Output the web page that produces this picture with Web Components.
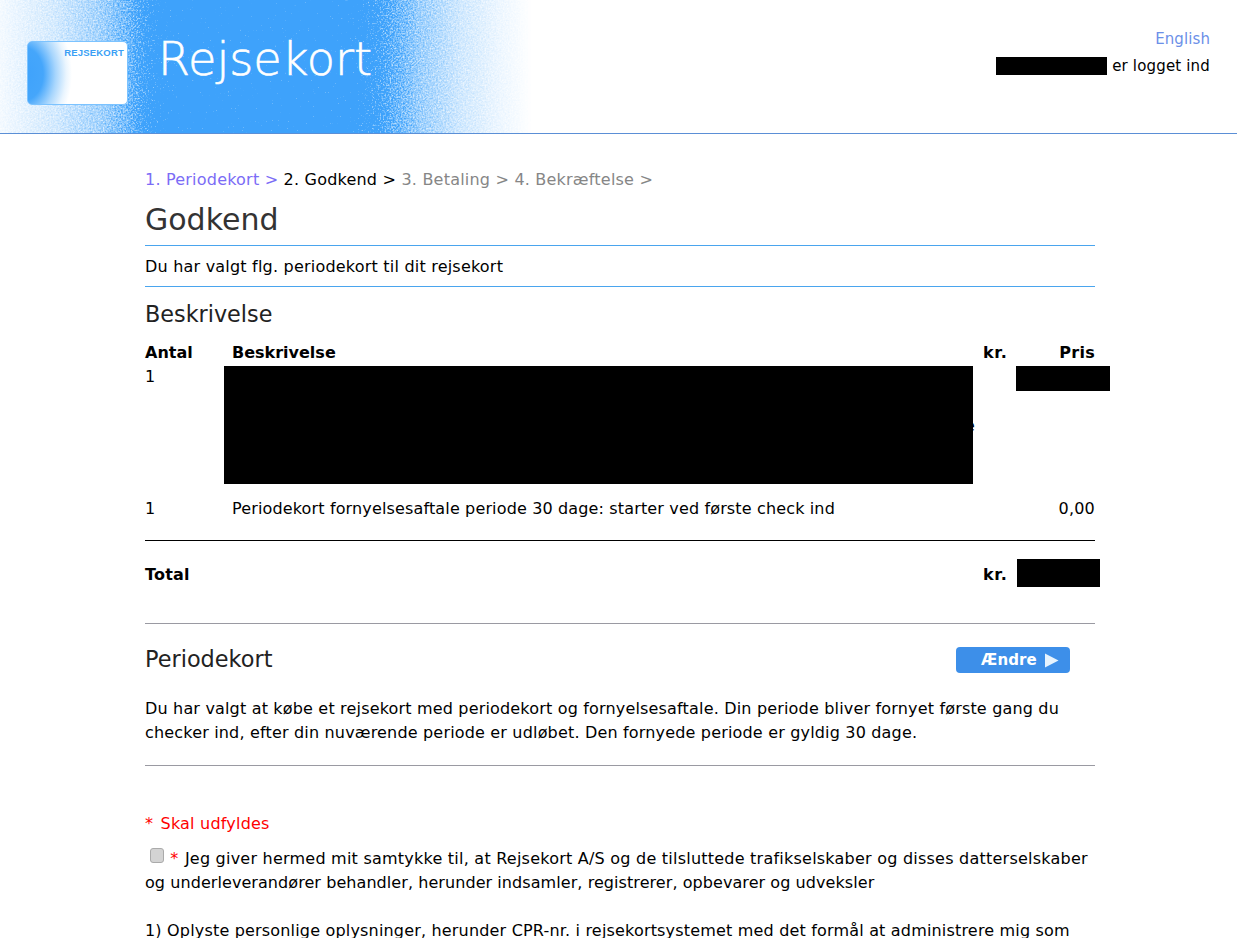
<!DOCTYPE html>
<html lang="da"><head><meta charset="utf-8"><title>Rejsekort</title>
<style>
html,body{margin:0;padding:0;background:#fff;}
body{font:16px/24px "DejaVu Sans",sans-serif;color:#000;height:938px;overflow:hidden;letter-spacing:.21px}
</style></head><body>
<rk-header></rk-header>
<rk-page>
  <rk-steps></rk-steps>
  <rk-order></rk-order>
  <rk-period></rk-period>
  <rk-consent></rk-consent>
</rk-page>
<script>
function def(name, html){
  customElements.define(name, class extends HTMLElement{
    constructor(){super();this.attachShadow({mode:'open'}).innerHTML=html;}
  });
}
def('rk-redact',`<style>:host{position:absolute;background:#000;display:block}</style>`);
def('rk-header',`<style>
:host{display:flex;position:relative;height:133px;border-bottom:1px solid #5b8fd6;justify-content:space-between;overflow:hidden;font:15px/24px "DejaVu Sans",sans-serif;letter-spacing:.17px}
svg.bg{position:absolute;left:0;top:0}
.left{position:relative;display:flex;align-items:flex-start;padding:41px 0 0 27px;gap:30px}
.card{width:99px;height:62px;border:1px solid #7cc3ff;border-radius:5px;position:relative;overflow:hidden;background:radial-gradient(ellipse 48px 66px at -4px 32px,#3ea2fb 0,#45a6fb 40%,#a8d6fd 66%,#eaf5fe 88%,#fff 100%),#fff;text-align:right}
.card b{display:block;font:bold 9.5px/10px "Liberation Sans",sans-serif;letter-spacing:.2px;color:#3a9ff5;padding:6px 3px 0 0}
.title{font:200 46.2px/44px "DejaVu Sans Light","DejaVu Sans ExtraLight","DejaVu Sans",sans-serif;color:#fff;letter-spacing:0;margin-top:-4px;-webkit-text-stroke:.6px #fff}
.right{position:relative;text-align:right;padding:27px 27px 0 0}
.en{color:#6c90e8;display:block;margin-bottom:3px;letter-spacing:.1px}
.user{position:relative;display:block}
rk-redact{left:-116px;top:3px;width:111px;height:18px}
</style>
<svg class="bg" width="560" height="133" aria-hidden="true">
<defs>
<linearGradient id="g" x1="0" x2="1" y1="0" y2="0">
<stop offset="0" stop-color="#3ea2fb" stop-opacity=".03"/>
<stop offset=".1" stop-color="#3ea2fb" stop-opacity=".12"/>
<stop offset=".18" stop-color="#3ea2fb" stop-opacity=".25"/>
<stop offset=".23" stop-color="#3ea2fb" stop-opacity=".4"/>
<stop offset=".26" stop-color="#3ea2fb" stop-opacity=".58"/>
<stop offset=".29" stop-color="#3ea2fb" stop-opacity=".85"/>
<stop offset=".32" stop-color="#3ea2fb" stop-opacity="1"/>
<stop offset=".62" stop-color="#3ea2fb" stop-opacity="1"/>
<stop offset=".66" stop-color="#3ea2fb" stop-opacity=".66"/>
<stop offset=".7" stop-color="#3ea2fb" stop-opacity=".44"/>
<stop offset=".75" stop-color="#3ea2fb" stop-opacity=".27"/>
<stop offset=".82" stop-color="#3ea2fb" stop-opacity=".13"/>
<stop offset=".89" stop-color="#3ea2fb" stop-opacity=".05"/>
<stop offset=".95" stop-color="#3ea2fb" stop-opacity="0"/>
</linearGradient>
<filter id="n" x="0" y="0" width="100%" height="100%" color-interpolation-filters="sRGB">
<feTurbulence type="fractalNoise" baseFrequency=".6" numOctaves="2" seed="4" result="t"/>
<feColorMatrix in="t" type="matrix" values="0 0 0 0 1 0 0 0 0 1 0 0 0 0 1 1.6 0 0 0 -.3" result="m"/>
<feComposite in="SourceGraphic" in2="m" operator="arithmetic" k1="1.3" k2=".45" k3="0" k4="0" result="a"/>
<feColorMatrix in="a" type="matrix" values="0 0 0 0 .243 0 0 0 0 .635 0 0 0 0 .984 0 0 0 1.7 0"/>
</filter>
</defs>
<rect width="560" height="133" fill="url(#g)" filter="url(#n)"/>
</svg>
<div class="left"><div class="card"><b>REJSEKORT</b></div><div class="title">Rejsekort</div></div>
<div class="right"><span class="en">English</span><span class="user"><rk-redact></rk-redact>er logget ind</span></div>`);
def('rk-page',`<style>:host{display:block;width:950px;margin-left:145px;padding-top:34px}</style><slot></slot>`);
def('rk-steps',`<style>
:host{display:block;font-size:16px;line-height:24px}
.a{color:#7b6cf6}.b{color:#000}.c{color:#868686}
h1{font:400 30px/40px "DejaVu Sans",sans-serif;letter-spacing:0;color:#333;margin:8px 0 5px}
.lead{border-top:1px solid #4aa5ee;border-bottom:1px solid #4aa5ee;padding:9px 0 7px}
</style>
<div><span class="a">1. Periodekort &gt;</span> <span class="b">2. Godkend &gt;</span> <span class="c">3. Betaling &gt; 4. Bekræftelse &gt;</span></div>
<h1>Godkend</h1>
<div class="lead">Du har valgt flg. periodekort til dit rejsekort</div>`);
def('rk-order',`<style>
:host{display:block}
h2{font:400 22.3px/28px "DejaVu Sans",sans-serif;letter-spacing:0;color:#222;margin:13px 0 13px}
.t{display:grid;grid-template-columns:87px 751px 24px 88px;line-height:24px}
.h{font-weight:700;letter-spacing:0}
.r{text-align:right}
.h.r{letter-spacing:.3px}
.h.k,.foot .k{letter-spacing:.7px}
.d{letter-spacing:.145px}
.tall{height:132px;position:relative}
.e{position:absolute;left:733px;top:49px}
.price{position:relative}
.foot{border-top:1px solid #000;margin-top:19px;padding-top:22px;display:grid;grid-template-columns:838px 24px 88px;height:83px;box-sizing:border-box;font-weight:700;letter-spacing:.2px}
.total{position:relative}
rk-redact.x{left:-8px;top:1px;width:749px;height:118px}
rk-redact.p{left:9px;top:1px;width:94px;height:25px}
rk-redact.q{left:10px;top:-4px;width:83px;height:28px}
</style>
<h2>Beskrivelse</h2>
<div class="t">
 <div class="h">Antal</div><div class="h">Beskrivelse</div><div class="h r k">kr.</div><div class="h r">Pris</div>
 <div class="tall">1</div><div class="tall"><span class="e">e</span><rk-redact class="x"></rk-redact></div><div></div><div class="price"><rk-redact class="p"></rk-redact></div>
 <div>1</div><div class="d">Periodekort fornyelsesaftale periode 30 dage: starter ved første check ind</div><div></div><div class="r">0,00</div>
</div>
<div class="foot"><div>Total</div><div class="r k">kr.</div><div class="total"><rk-redact class="q"></rk-redact></div></div>`);
def('rk-button',`<style>
:host{display:flex;align-items:center;justify-content:center;gap:7px;width:114px;height:26px;background:#3d8fe9;border-radius:4px;color:#fff;font:700 15px/26px "DejaVu Sans",sans-serif;letter-spacing:.1px;padding-left:14px;box-sizing:border-box;margin-top:2px}
svg{display:block}
</style><slot></slot><svg width="15" height="15" viewBox="0 0 15 15" aria-hidden="true"><path d="M1 .5 14.5 7.5 1 14.5z" fill="#e6f3fe"/></svg>`);
def('rk-period',`<style>
:host{display:block;border-top:1px solid #9a9aa2;border-bottom:1px solid #9a9aa2;padding:0 0 20px;letter-spacing:.175px}
.top{display:flex;justify-content:space-between;align-items:center;padding:21px 25px 0 0;height:28px;margin-bottom:24px}
h2{font:400 22.4px/28px "DejaVu Sans",sans-serif;letter-spacing:0;color:#222;margin:0}
p{margin:0}
</style>
<div class="top"><h2>Periodekort</h2><rk-button>Ændre</rk-button></div>
<p>Du har valgt at købe et rejsekort med periodekort og fornyelsesaftale. Din periode bliver fornyet første gang du checker ind, efter din nuværende periode er udløbet. Den fornyede periode er gyldig 30 dage.</p>`);
def('rk-consent',`<style>
:host{display:block;padding-top:46px}
.req{color:#f00}
.m{margin-right:2px}
p{margin:0}
.line{margin-top:11px;letter-spacing:.23px}
.l2{letter-spacing:.07px}
input{appearance:none;-webkit-appearance:none;width:12px;height:13px;margin:0 1px 0 5px;background:#d3d3d3;border:1px solid #aaa;border-radius:3px;vertical-align:1px;box-sizing:content-box}
.star{margin-right:1px}
.gap{margin-top:24px;letter-spacing:.18px}
</style>
<p class="req"><span class="m">*</span> Skal udfyldes</p>
<p class="line"><input type="checkbox" aria-label="Samtykke"> <span class="req star">*</span> Jeg giver hermed mit samtykke til, at Rejsekort A/S og de tilsluttede trafikselskaber og disses datterselskaber <span class="l2">og underleverandører behandler, herunder indsamler, registrerer, opbevarer og udveksler</span></p>
<p class="gap">1) Oplyste personlige oplysninger, herunder CPR-nr. i rejsekortsystemet med det formål at administrere mig som</p>`);
</script>
</body></html>
